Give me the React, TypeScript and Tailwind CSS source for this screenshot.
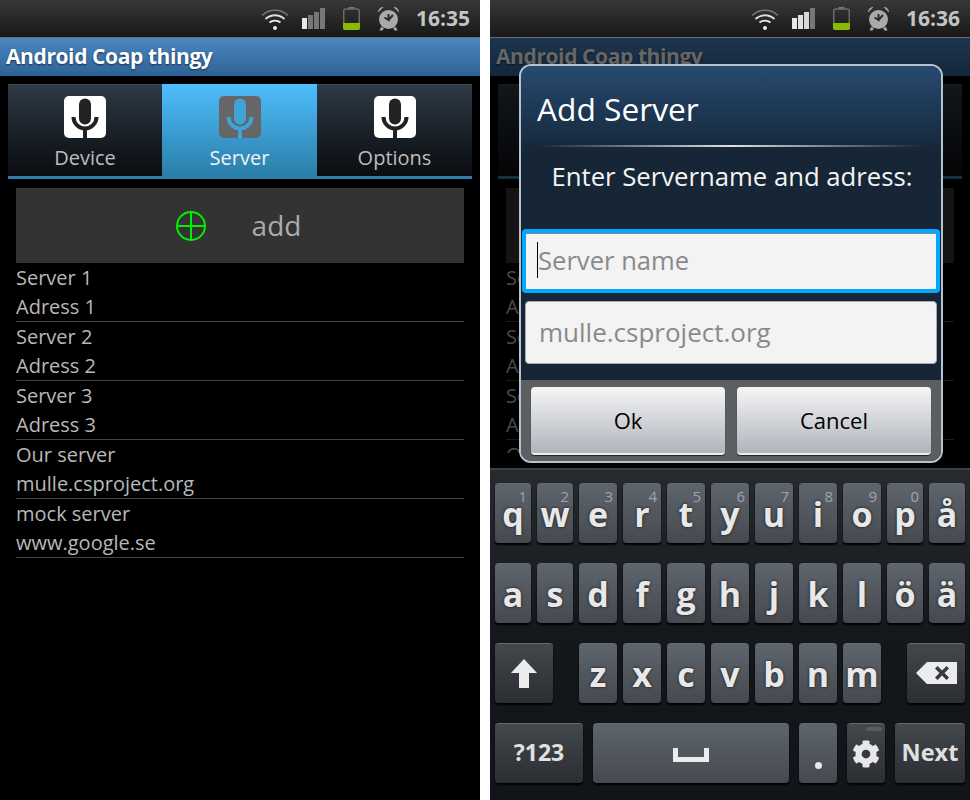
import { FaCog } from "react-icons/fa";

const font = "font-['Open_Sans',sans-serif]";

const servers = [
  ["Server 1", "Adress 1"],
  ["Server 2", "Adress 2"],
  ["Server 3", "Adress 3"],
  ["Our server", "mulle.csproject.org"],
  ["mock server", "www.google.se"],
];

const row1 = [
  ["q", "1", "w-[36px]"],
  ["w", "2", "w-[36px]"],
  ["e", "3", "w-[38px]"],
  ["r", "4", "w-[38px]"],
  ["t", "5", "w-[38px]"],
  ["y", "6", "w-[38px]"],
  ["u", "7", "w-[38px]"],
  ["i", "8", "w-[38px]"],
  ["o", "9", "w-[38px]"],
  ["p", "0", "w-[36px]"],
  ["å", "", "w-[36px]"],
];
const row2 = [
  ["a", "w-[36px]"],
  ["s", "w-[36px]"],
  ["d", "w-[38px]"],
  ["f", "w-[38px]"],
  ["g", "w-[38px]"],
  ["h", "w-[38px]"],
  ["j", "w-[38px]"],
  ["k", "w-[38px]"],
  ["l", "w-[38px]"],
  ["ö", "w-[36px]"],
  ["ä", "w-[36px]"],
];

function Wifi() {
  return (
    <svg width="28" height="22" viewBox="0 0 28 22" fill="none" className="shrink-0">
      <path d="M1 7.5C8.5 0.5 19.5 0.5 27 7.5" stroke="#777" strokeWidth="1.6" />
      <path d="M4.5 11C10 6 18 6 23.5 11" stroke="#ddd" strokeWidth="1.8" />
      <path d="M8.5 14.5C11.5 12 16.5 12 19.5 14.5" stroke="#eee" strokeWidth="1.8" />
      <circle cx="14" cy="20" r="2" fill="#eee" />
    </svg>
  );
}

function Signal({ lit }: { lit: number }) {
  return (
    <svg width="23" height="21" viewBox="0 0 23 21" className="shrink-0">
      <rect x="0" y="10" width="5" height="11" fill="#e8e8e8" />
      <rect x="6" y="7" width="5" height="14" fill={lit > 1 ? "#e0e0e0" : "#777"} />
      <rect x="12" y="4" width="5" height="17" fill={lit > 2 ? "#d8d8d8" : "#777"} />
      <rect x="18" y="0" width="5" height="21" fill="#777" />
    </svg>
  );
}

function Battery() {
  return (
    <svg width="17" height="23" viewBox="0 0 17 23" fill="none" className="shrink-0">
      <rect x="5.5" y="0" width="6" height="2" fill="#777" />
      <rect x="0.75" y="2" width="15.5" height="20.25" rx="2" stroke="#6b6b6b" strokeWidth="1.5" />
      <path d="M0 16H17V21a2 2 0 0 1-2 2H2a2 2 0 0 1-2-2Z" fill="#8abb00" />
    </svg>
  );
}

function Alarm() {
  return (
    <svg width="23" height="25" viewBox="0 0 23 25" className="shrink-0">
      <path d="M1 6.5C1 3 3.5 1 6.5 1Z" fill="#aaa" />
      <path d="M22 6.5C22 3 19.5 1 16.5 1Z" fill="#aaa" />
      <path d="M4 21L2.5 24.5H5.5L7 22ZM19 21L20.5 24.5H17.5L16 22Z" fill="#aaa" />
      <circle cx="11.5" cy="13.5" r="9.5" fill="#aaa" />
      <path d="M11.5 8V14L7.5 11.5M11.5 14L16 9" stroke="#2b2b2b" strokeWidth="2" fill="none" />
    </svg>
  );
}

function StatusBar({ time, lit }: { time: string; lit: number }) {
  return (
    <div className="flex h-[38px] shrink-0 items-center justify-end border-b border-b-[#6a6a6a] bg-linear-to-b from-[#383838] to-[#181818] pr-[10px]">
      <Wifi />
      <div className="ml-[13px]">
        <Signal lit={lit} />
      </div>
      <div className="ml-[18px]">
        <Battery />
      </div>
      <div className="ml-[17px]">
        <Alarm />
      </div>
      <span className="ml-[16px] text-[21px] leading-none font-bold text-[#c4c4c4]">{time}</span>
    </div>
  );
}

function MicIcon({ active }: { active?: boolean }) {
  const box = active ? "#666666" : "#ffffff";
  const mic = active ? "#3ea4d8" : "#222222";
  return (
    <svg width="42" height="42" viewBox="0 0 42 42">
      <rect width="42" height="42" rx="5" fill={box} />
      <rect x="15" y="2.5" width="12" height="26" rx="6" fill={mic} />
      <path d="M9.5 21a11.5 11.5 0 0 0 23 0" stroke={mic} strokeWidth="4" fill="none" />
      <rect x="19" y="33" width="4" height="9" fill={mic} />
    </svg>
  );
}

function Tab({ label, active, width }: { label: string; active?: boolean; width: string }) {
  return (
    <div
      className={`flex h-[92px] flex-col items-center border-t pt-[11px] ${width} ${
        active
          ? "border-t-[#4dbefc] bg-linear-to-b from-[#4dbefc] to-[#2a7ea9] text-[#f2f2f2]"
          : "border-t-[#3c4650] bg-linear-to-b from-[#2e3a47] to-[#0a0c10] text-[#bdbdbd]"
      }`}
    >
      <MicIcon active={active} />
      <span className="mt-[6px] text-[20px] leading-[28px]">{label}</span>
    </div>
  );
}

function AppBody({ clipList }: { clipList?: boolean }) {
  return (
    <div className="flex h-full flex-col bg-black">
      <div className="flex h-[38px] shrink-0 items-center bg-linear-to-b from-[#4b87c2] to-[#2e6295] pb-[2px] pl-[6px]">
        <span className="text-[21px] leading-none font-bold tracking-[-0.4px] text-white [text-shadow:0_1px_2px_#103050]">
          Android Coap thingy
        </span>
      </div>
      <div className="mx-[8px] mt-[8px] flex border-b-[3px] border-b-[#2a7ea9]">
        <Tab label="Device" width="w-[154px]" />
        <Tab label="Server" width="w-[155px]" active />
        <Tab label="Options" width="w-[155px]" />
      </div>
      <div className="mx-[16px] mt-[9px]">
        <div className="flex h-[75px] items-center justify-center bg-[#333333] pr-[3px]">
          <svg width="30" height="30" viewBox="0 0 30 30" fill="none" stroke="#00f000" strokeWidth="2">
            <circle cx="15" cy="15" r="14" />
            <path d="M15 1V29M1 15H29" />
          </svg>
          <span className="mb-[2px] ml-[46px] text-[28px] leading-none text-[#ababab]">add</span>
        </div>
        <div className={clipList ? "h-[190px] overflow-hidden" : ""}>
          {servers.map(([name, address]) => (
            <div
              key={name}
              className="h-[59px] border-b border-b-[#444444] text-[20px] leading-[29px] text-[#b8b8b8]"
            >
              <div>{name}</div>
              <div>{address}</div>
            </div>
          ))}
        </div>
      </div>
    </div>
  );
}

function Key({
  width,
  dark,
  hint,
  children,
}: {
  width: string;
  dark?: boolean;
  hint?: string;
  children: React.ReactNode;
}) {
  return (
    <div
      className={`relative flex h-[60px] shrink-0 items-center justify-center rounded-[4px] border-t border-t-[#666b72] text-[#e8e8e8] shadow-[0_2px_2px_#000] ${width} ${
        dark ? "bg-linear-to-b from-[#43484d] to-[#2b2e32]" : "bg-linear-to-b from-[#5e656e] to-[#46494f]"
      }`}
    >
      {hint && (
        <span className="absolute top-[2px] right-[4px] text-[15px] leading-[20px] font-normal text-[#a0a4a8]">
          {hint}
        </span>
      )}
      {children}
    </div>
  );
}

function Letter({ children }: { children: string }) {
  return <span className="text-[34px] leading-none font-bold text-[#e8e8e8] [text-shadow:0_0_3px_#111]">{children}</span>;
}

function Keyboard() {
  return (
    <div className="flex h-[332px] shrink-0 flex-col gap-[20px] border-t-2 border-t-[#3c3f42] bg-linear-to-b from-[#272b30] via-[#14181d] to-[#11151a] px-[5px] pt-[13px]">
      <div className="flex gap-[6px]">
        {row1.map(([letter, hint, width]) => (
          <Key key={letter} width={width} hint={hint}>
            <Letter>{letter}</Letter>
          </Key>
        ))}
      </div>
      <div className="flex gap-[6px]">
        {row2.map(([letter, width]) => (
          <Key key={letter} width={width}>
            <Letter>{letter}</Letter>
          </Key>
        ))}
      </div>
      <div className="flex gap-[6px]">
        <Key width="w-[58px]" dark>
          <svg width="26" height="29" viewBox="0 0 26 29">
            <path d="M13 0L26 14H18V29H8V14H0Z" fill="#ececec" />
          </svg>
        </Key>
        <div className="w-[20px]" />
        {["z", "x", "c", "v", "b", "n", "m"].map((letter) => (
          <Key key={letter} width="w-[38px]">
            <Letter>{letter}</Letter>
          </Key>
        ))}
        <div className="w-[20px]" />
        <Key width="w-[58px]" dark>
          <svg width="41" height="23" viewBox="0 0 41 23">
            <path
              fillRule="evenodd"
              d="M11 0H41V22H11L0 11ZM19 6.5L23.5 11L19 15.5L21.5 18L26 13.5L30.5 18L33 15.5L28.5 11L33 6.5L30.5 4L26 8.5L21.5 4Z"
              fill="#ececec"
            />
          </svg>
        </Key>
      </div>
      <div className="flex gap-[10px]">
        <Key width="w-[88px]" dark>
          <span className="mb-[2px] text-[23px] leading-none font-bold text-[#e0e0e0]">?123</span>
        </Key>
        <Key width="w-[196px]">
          <svg width="36" height="14" viewBox="0 0 36 14" className="mt-[2px]">
            <path d="M0 0H5V9H31V0H36V14H0Z" fill="#ececec" />
          </svg>
        </Key>
        <Key width="w-[38px]">
          <div className="mt-[24px] size-[7px] rounded-full bg-[#e8e8e8]" />
        </Key>
        <Key width="w-[38px]" dark>
          <div className="absolute top-[3px] right-[3px] h-[4px] w-[16px] rounded-full bg-[#5a5e62]" />
          <FaCog className="size-[28px] text-[#e8e8e8]" />
        </Key>
        <Key width="w-[70px]" dark>
          <span className="mb-[2px] text-[23.5px] leading-none font-bold text-[#e0e0e0]">Next</span>
        </Key>
      </div>
    </div>
  );
}

function DialogButton({ label }: { label: string }) {
  return (
    <div className="flex h-[68px] w-[194px] items-center justify-center rounded-[4px] border-b-2 border-b-[#f0f0f0] bg-linear-to-b from-[#f6f6f6] to-[#b0b4bc] text-[22px] leading-none text-black shadow-[0_1px_1px_#222]">
      {label}
    </div>
  );
}

function Dialog() {
  return (
    <div className="absolute top-[64px] left-[29px] flex h-[399px] w-[424px] flex-col overflow-hidden rounded-[12px] border-2 border-[#b6c2ce] bg-[#162637]">
      <div className="h-[79px] shrink-0 bg-linear-to-b from-[#274a71] to-[#172a3e] pt-[21px] pl-[16px] text-[31.7px] leading-[44px] text-white">
        Add Server
      </div>
      <div className="mx-[18px] h-[2px] shrink-0 bg-linear-to-r from-transparent via-[#e0e0e0] to-transparent" />
      <div className="mt-[13px] pl-[2px] text-center text-[25.7px] leading-[34px] text-[#f4f4f4]">
        Enter Servername and adress:
      </div>
      <div className="mx-[1px] mt-[35px] h-[64px] rounded-[4px] border-[4px] border-[#00a8ff] bg-[#f3f3f3]">
        <div className="relative h-full border-t border-t-[#888888] pl-[12px] text-[25.6px] leading-[53px] text-[#8a8a8a]">
          <div className="absolute top-[8px] left-[11px] h-[36px] w-[1px] bg-black" />
          Server name
        </div>
      </div>
      <div className="mx-[4px] mt-[8px] h-[63px] rounded-[4px] border border-[#aaaaaa] bg-[#f3f3f3] pl-[13px] text-[26px] leading-[60px] text-[#8a8a8a]">
        mulle.csproject.org
      </div>
      <div className="mt-[16px] flex flex-1 justify-center gap-[12px] bg-[#5c5f62] pt-[7px]">
        <DialogButton label="Ok" />
        <DialogButton label="Cancel" />
      </div>
    </div>
  );
}

export default function App() {
  return (
    <div className={`flex h-[800px] w-[970px] gap-[10px] overflow-hidden bg-white ${font}`}>
      <div className="flex h-full w-[480px] flex-col bg-black">
        <StatusBar time="16:35" lit={1} />
        <div className="flex-1 overflow-hidden">
          <AppBody />
        </div>
      </div>
      <div className="relative flex h-full w-[480px] flex-col bg-black">
        <StatusBar time="16:36" lit={3} />
        <div className="relative flex-1 overflow-hidden">
          <AppBody clipList />
          <div className="absolute inset-0 bg-black/60" />
        </div>
        <Keyboard />
        <Dialog />
      </div>
    </div>
  );
}
